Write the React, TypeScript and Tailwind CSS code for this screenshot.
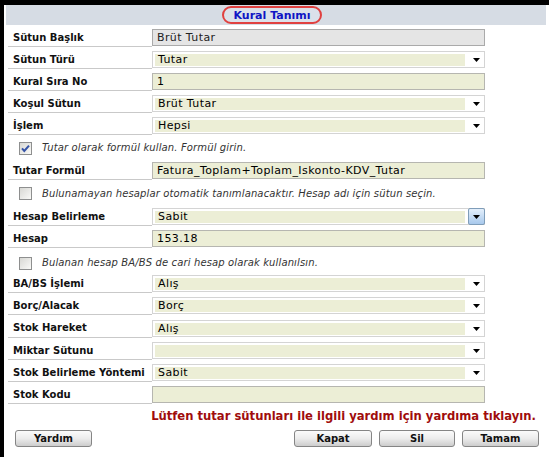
import React from 'react';

function Arrow() {
  return (
    <svg width="7" height="4" viewBox="0 0 7 4">
      <polygon points="0,0 7,0 3.5,4" fill="#000" />
    </svg>
  );
}

function Check({ checked }: { checked?: boolean }) {
  return (
    <svg width="13" height="13" viewBox="0 0 13 13">
      <defs>
        <linearGradient id="cbg" x1="0" y1="0" x2="1" y2="1">
          <stop offset="0" stopColor="#d6d6d2" />
          <stop offset="1" stopColor="#fbfbf9" />
        </linearGradient>
      </defs>
      <rect x="0.5" y="0.5" width="12" height="12" fill="url(#cbg)" stroke="#8e8f8f" />
      {checked && <path d="M3 6.3 L5.3 9 L10 3.6" stroke="#3553a6" strokeWidth="2" fill="none" />}
    </svg>
  );
}

function Select({ value, focused }: { value: string; focused?: boolean }) {
  return (
    <div className="h-[17px] w-[333px] border border-[#d4d4d4] bg-white flex items-center">
      <div className="ml-[2px] w-[310px] h-[12px] bg-[#eceed6] flex items-center pl-[3px] text-[11px] leading-none tracking-[0.4px] text-black">
        {value}
      </div>
      {focused ? (
        <div className="ml-auto -mr-px h-[17px] w-[17px] border border-[#7f9db9] rounded-[2px] bg-gradient-to-b from-[#e4effb] to-[#a8c9ec] flex items-center justify-center">
          <Arrow />
        </div>
      ) : (
        <div className="flex-1 flex items-center justify-center pl-[3px]">
          <Arrow />
        </div>
      )}
    </div>
  );
}

function Input({ value, grey }: { value: string; grey?: boolean }) {
  return (
    <div
      className={
        grey
          ? 'h-[17px] w-[333px] border border-[#aaaaaa] bg-[#e5e5e5] flex items-center pl-[4px] text-[11px] leading-none tracking-[0.4px] text-[#222]'
          : 'h-[17px] w-[333px] border border-[#b6b6b0] bg-[#eceed6] flex items-center pl-[4px] text-[11px] leading-none tracking-[0.4px] text-black'
      }
    >
      {value}
    </div>
  );
}

function Row({ label, children, tall }: { label: string; children: React.ReactNode; tall?: boolean }) {
  return (
    <div className={tall ? 'flex h-[23px]' : 'flex h-[22px]'}>
      <div className="w-[144px] border-b border-[#c9c9c9] flex items-center pt-[4px] pl-[5px] font-bold text-[10px] leading-none text-[#111] whitespace-nowrap">
        {label}
      </div>
      <div className="flex items-end pb-[1px]">{children}</div>
    </div>
  );
}

function CheckRow({ text, checked, h }: { text: string; checked?: boolean; h: string }) {
  return (
    <div className={h}>
      <div className="flex items-center h-full pl-[11px] gap-[10px] pt-[3px]">
        <Check checked={checked} />
        <span className="italic text-[10px] leading-none tracking-[0.13px] text-[#333] whitespace-nowrap">{text}</span>
      </div>
    </div>
  );
}

function Btn({ label, w }: { label: string; w: string }) {
  return (
    <div
      className={
        w +
        ' h-[17px] border border-[#858585] rounded-[3px] bg-gradient-to-b from-[#fbfbfb] via-[#ececec] to-[#cdcdcd] flex items-center justify-center font-bold text-[10px] leading-none text-[#111]'
      }
    >
      {label}
    </div>
  );
}

export default function App() {
  return (
    <div className="w-[549px] h-[457px] bg-white border-t-[5px] border-l-[4px] border-black font-['DejaVu_Sans',sans-serif] overflow-hidden">
      <div className="ml-[2px] mr-[3px] h-[20px] bg-[#d6dce4] flex items-center justify-center pr-[8px]">
        <div className="h-[18px] px-[10px] border-2 border-[#e0403f] rounded-full bg-[#dbe1ea] flex items-center font-bold text-[11px] leading-none text-[#0f14c4]">
          Kural Tanımı
        </div>
      </div>
      <div className="ml-[4px]">
        <Row label="Sütun Başlık"><Input value="Brüt Tutar" grey /></Row>
        <Row label="Sütun Türü"><Select value="Tutar" /></Row>
        <Row label="Kural Sıra No"><Input value="1" /></Row>
        <Row label="Koşul Sütun"><Select value="Brüt Tutar" /></Row>
        <Row label="İşlem"><Select value="Hepsi" /></Row>
        <CheckRow h="h-[23px]" checked text="Tutar olarak formül kullan. Formül girin." />
        <Row label="Tutar Formül"><Input value="Fatura_Toplam+Toplam_Iskonto-KDV_Tutar" /></Row>
        <CheckRow h="h-[24px]" text="Bulunamayan hesaplar otomatik tanımlanacaktır. Hesap adı için sütun seçin." />
        <Row label="Hesap Belirleme"><Select value="Sabit" focused /></Row>
        <Row label="Hesap"><Input value="153.18" /></Row>
        <CheckRow h="h-[23px] pt-[4px]" text="Bulanan hesap BA/BS de cari hesap olarak kullanılsın." />
        <Row label="BA/BS İşlemi"><Select value="Alış" /></Row>
        <Row label="Borç/Alacak"><Select value="Borç" /></Row>
        <Row label="Stok Hareket" tall><Select value="Alış" /></Row>
        <Row label="Miktar Sütunu"><Select value="" /></Row>
        <Row label="Stok Belirleme Yöntemi"><Select value="Sabit" /></Row>
        <Row label="Stok Kodu"><Input value="" /></Row>
      </div>
      <div className="h-[24px] flex items-center justify-end pr-[13px] pt-[2px] font-bold text-[11.6px] leading-none text-[#a00c0c] whitespace-nowrap">
        Lütfen tutar sütunları ile ilgili yardım için yardıma tıklayın.
      </div>
      <div className="mt-[2px] flex h-[17px]">
        <div className="ml-[11px]">
          <Btn label="Yardım" w="w-[77px]" />
        </div>
        <div className="ml-auto mr-[10px] flex gap-[7px]">
          <Btn label="Kapat" w="w-[78px]" />
          <Btn label="Sil" w="w-[76px]" />
          <Btn label="Tamam" w="w-[77px]" />
        </div>
      </div>
    </div>
  );
}
